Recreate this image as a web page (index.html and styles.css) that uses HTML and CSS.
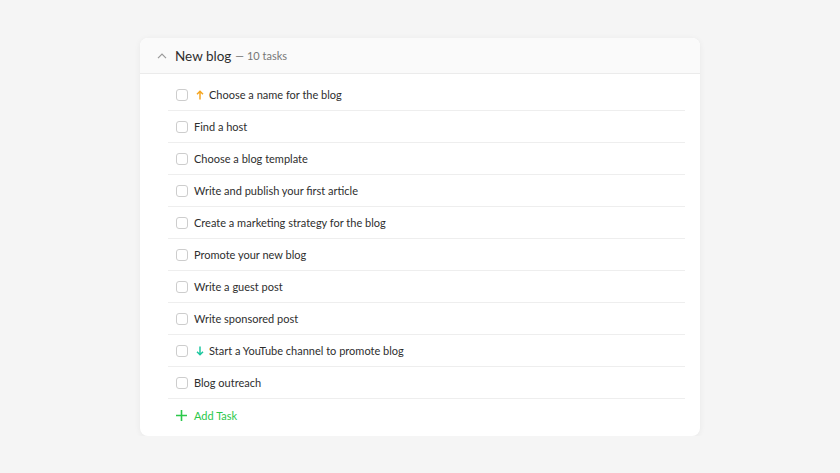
FILE: index.html
```html
<!DOCTYPE html>
<html lang="en">
<head>
    <meta charset="UTF-8">
    <meta name="viewport" content="width=device-width, initial-scale=1.0">
    <title>New blog</title>
    <link rel="stylesheet" href="styles.css">
</head>
<body>
    <div class="project">
        <div class="project-header">
            <svg class="chevron" width="10" height="6" viewBox="0 0 10 6"><path d="M1 5.2 L5 1.2 L9 5.2" fill="none" stroke="#999" stroke-width="1.2"/></svg>
            <span class="project-name">New blog</span>
            <span class="project-count">— 10 tasks</span>
        </div>

        <ul class="task-list">
            <li class="task">
                <span class="checkbox"></span>
                <svg class="priority" width="8" height="10" viewBox="0 0 8 10"><path d="M4 9.5 V1.5 M1 4.2 L4 1.2 L7 4.2" fill="none" stroke="#f5a623" stroke-width="1.5"/></svg>
                <span class="task-title">Choose a name for the blog</span>
            </li>
            <li class="task">
                <span class="checkbox"></span>
                <span class="task-title">Find a host</span>
            </li>
            <li class="task">
                <span class="checkbox"></span>
                <span class="task-title">Choose a blog template</span>
            </li>
            <li class="task">
                <span class="checkbox"></span>
                <span class="task-title">Write and publish your first article</span>
            </li>
            <li class="task">
                <span class="checkbox"></span>
                <span class="task-title">Create a marketing strategy for the blog</span>
            </li>
            <li class="task">
                <span class="checkbox"></span>
                <span class="task-title">Promote your new blog</span>
            </li>
            <li class="task">
                <span class="checkbox"></span>
                <span class="task-title">Write a guest post</span>
            </li>
            <li class="task">
                <span class="checkbox"></span>
                <span class="task-title">Write sponsored post</span>
            </li>
            <li class="task">
                <span class="checkbox"></span>
                <svg class="priority" width="8" height="10" viewBox="0 0 8 10"><path d="M4 0.5 V8.5 M1 5.8 L4 8.8 L7 5.8" fill="none" stroke="#1fc7a0" stroke-width="1.5"/></svg>
                <span class="task-title">Start a YouTube channel to promote blog</span>
            </li>
            <li class="task">
                <span class="checkbox"></span>
                <span class="task-title">Blog outreach</span>
            </li>
        </ul>

        <div class="add-task">
            <svg width="11" height="11" viewBox="0 0 11 11"><path d="M5.5 0 V11 M0 5.5 H11" stroke="#2bc84a" stroke-width="1.6"/></svg>
            <span>Add Task</span>
        </div>
    </div>
</body>
</html>
```

FILE: styles.css
```css
body {
    margin: 0;
    padding: 38px 0 0 140px;
    background-color: #f5f5f5;
    font-family: Lato, "Noto Sans", sans-serif;
    color: #2e2e2e;
}
.project {
    width: 560px;
    height: 398px;
    background-color: white;
    border-radius: 8px;
    box-shadow: 0 1px 6px rgba(0,0,0,0.06);
    overflow: hidden;
}
.project-header {
    display: flex;
    align-items: center;
    height: 35px;
    padding-left: 17px;
    background-color: #fafafa;
    border-bottom: 1px solid #ebebeb;
}
.chevron {
    margin-right: 8px;
}
.project-name {
    font-size: 13.5px;
    color: #2e2e2e;
}
.project-count {
    font-size: 11px;
    color: #777;
    margin-left: 4px;
}
.task-list {
    list-style: none;
    margin: 0 15px 0 28px;
    padding: 5px 0 0 0;
}
.task {
    display: flex;
    align-items: center;
    box-sizing: border-box;
    height: 32px;
    padding-left: 8px;
    border-bottom: 1px solid #eeeeee;
}
.checkbox {
    width: 10px;
    height: 10px;
    border: 1.5px solid #cdcdcd;
    border-radius: 3px;
    margin-right: 6px;
}
.priority {
    margin: 0 5px 0 2px;
}
.task-title {
    font-size: 11px;
    color: #2e2e2e;
}
.add-task {
    display: flex;
    align-items: center;
    height: 32px;
    padding-left: 36px;
    color: #2bc84a;
    font-size: 11px;
}
.add-task svg {
    margin-right: 7px;
}
```
